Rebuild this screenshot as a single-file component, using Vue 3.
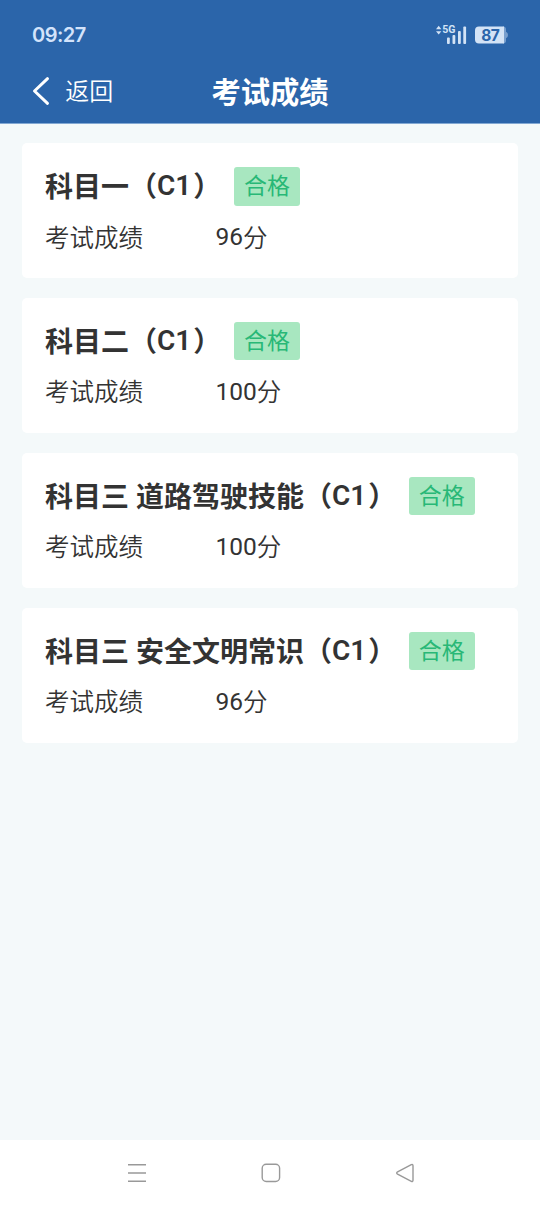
<script setup>
const results = [
  { subject: '科目一', score: '96' },
  { subject: '科目二', score: '100' },
  { subject: '科目三 道路驾驶技能', score: '100' },
  { subject: '科目三 安全文明常识', score: '96' },
]
</script>

<template>
  <div class="screen">
    <header class="header">
      <div class="status">
        <span class="clock">09:27</span>
        <div class="indicators">
          <svg class="signal" width="32" height="22" viewBox="0 0 32 22">
            <path d="M0 5.200 2.700 1.800l2.700 3.400zM0 7.200h5.400L2.700 10.600z" />
            <text x="6.200" y="9">5G</text>
            <rect x="11" y="13.500" width="2.800" height="6.500" rx="0.900" />
            <rect x="16.500" y="11" width="2.800" height="9" rx="0.900" />
            <rect x="22" y="7" width="2.800" height="13" rx="0.900" />
            <rect x="27.300" y="2.500" width="2.800" height="17.500" rx="0.900" />
          </svg>
          <svg class="battery" width="34" height="18" viewBox="0 0 34 18">
            <path class="cap" d="M28 0.500q3 0 3 3v2.200q2 .8 2 3.300t-2 3.300v2.200q0 3-3 3z" />
            <path class="charge" d="M4 .5H29V17.500H4Q0 17.500 0 13.500V4.500Q0 .5 4 .5z" />
            <text x="15.300" y="14.600" text-anchor="middle">87</text>
          </svg>
        </div>
      </div>
      <nav class="navbar">
        <div class="back">
          <svg width="18" height="30" viewBox="0 0 18 30">
            <path d="M15.500 2.700 2.500 15l13 12.300" />
          </svg>
          <span>返回</span>
        </div>
        <h1>考试成绩</h1>
        <div></div>
      </nav>
    </header>

    <main class="list">
      <section v-for="item in results" :key="item.subject" class="card">
        <div class="heading">
          <h2>{{ item.subject }}（<span class="class-code">C1</span><span class="closing">）</span></h2>
          <span class="badge">合格</span>
        </div>
        <div class="row">
          <span class="label">考试成绩</span>
          <span><span class="number">{{ item.score }}</span>分</span>
        </div>
      </section>
    </main>

    <footer class="system-nav">
      <svg width="20" height="20" viewBox="0 0 20 20"><path d="M1 1.700h18M1 10h18M1 18.200h18" /></svg>
      <svg width="20" height="20" viewBox="0 0 20 20"><rect x="1.200" y="1.300" width="17.400" height="17.200" rx="4" /></svg>
      <svg width="20" height="20" viewBox="0 0 20 20"><path d="M16.300 1.700 2.600 8.900q-1.800 1.100 0 2.200l13.700 7.200q1.700.6 1.700-1V2.700q0-1.600-1.700-1z" /></svg>
    </footer>
  </div>
</template>

<style>
body { margin: 0; }
</style>

<style scoped>
.screen {
  display: flex;
  flex-direction: column;
  width: 540px;
  height: 1206px;
  overflow: hidden;
  background: #f4f9fa;
  color: #333;
  font-family: Roboto, "Noto Sans CJK SC", sans-serif;
}
.header {
  flex: none;
  height: 124px;
  box-sizing: border-box;
  border-bottom: 1px solid #82a8d3;
  background: #2b65aa;
  color: #fff;
}
.status {
  display: flex;
  align-items: center;
  justify-content: space-between;
  height: 60px;
  padding: 10px 31px 0 32px;
  box-sizing: border-box;
  color: #d3e3fb;
}
.clock {
  font: 600 20px/24px Inter, sans-serif;
  letter-spacing: -0.500px;
}
.indicators {
  display: flex;
  align-items: center;
  gap: 7px;
}
.indicators svg { fill: #d3e3f6; }
.signal text { font: 700 10.500px Roboto, sans-serif; }
.battery .cap { fill: #789fce; }
.battery text { font: 700 15.500px Inter, sans-serif; letter-spacing: -0.500px; fill: #2b65aa; }
.navbar {
  display: grid;
  grid-template-columns: 1fr auto 1fr;
  align-items: center;
  height: 62px;
}
.back {
  display: flex;
  align-items: center;
  gap: 15px;
  padding-left: 32.300px;
  font-size: 24px;
  line-height: 30px;
  font-weight: 350;
}
.back span { padding-top: 2px; }
.back svg {
  fill: none;
  stroke: #fff;
  stroke-width: 3;
  stroke-linecap: round;
  stroke-linejoin: round;
}
h1 {
  margin: 0;
  padding-top: 3px;
  font-size: 29.300px;
  line-height: 40px;
  font-weight: 600;
}
.list {
  flex: 1;
  display: flex;
  flex-direction: column;
  gap: 19.700px;
  padding: 19.200px 21.600px;
}
.card {
  height: 135.200px;
  padding: 24px 23.400px;
  box-sizing: border-box;
  border-radius: 5px;
  background: #fff;
}
.heading {
  display: flex;
  align-items: center;
  gap: 14.300px;
  height: 38.400px;
}
h2 {
  margin: 0;
  padding-top: 3px;
  font-size: 28px;
  line-height: 38px;
  font-weight: 700;
  white-space: nowrap;
}
.class-code {
  position: relative;
  top: -2px;
  font-weight: 600;
}
.closing {
  position: relative;
  left: 2px;
}
.badge {
  width: 66.500px;
  height: 38.400px;
  border-radius: 3px;
  background: #a8e7c0;
  color: #28b877;
  font-size: 23px;
  line-height: 40px;
  text-align: center;
}
.row {
  display: flex;
  margin-top: 14px;
  font-size: 24.500px;
  line-height: 37px;
  font-weight: 350;
}
.label { width: 170.500px; }
.number {
  position: relative;
  top: -1.500px;
  font-weight: 400;
}
.system-nav {
  flex: none;
  display: grid;
  grid-template-columns: 20px 20px 20px;
  column-gap: 114px;
  justify-content: center;
  height: 66px;
  padding: 23px 0 0 2px;
  box-sizing: border-box;
  background: #fff;
}
.system-nav svg {
  fill: none;
  stroke: #999;
  stroke-width: 1.400;
}
</style>
